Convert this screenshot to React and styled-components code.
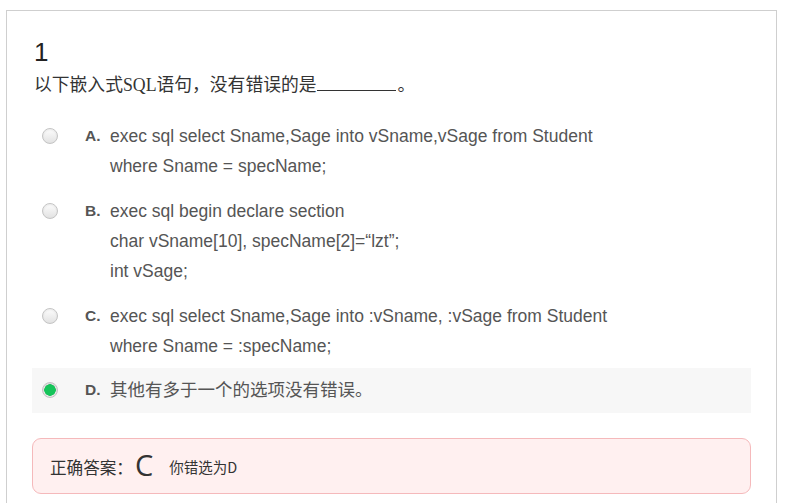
import React from "react";
import styled, { createGlobalStyle } from "styled-components";

const Global = createGlobalStyle`
  html, body { margin: 0; padding: 0; background: #fff; }
  body { font-family: "Liberation Sans", Arial, "Noto Sans CJK SC", sans-serif; }
`;

const Card = styled.div`
  margin: 10px 0 0 6px;
  width: 771px;
  height: 520px;
  box-sizing: border-box;
  border: 1px solid #cfcfcf;
  border-bottom: none;
  padding: 26px 25px 0 25px;
  background: #fff;
`;

const Num = styled.div`
  font-family: "Liberation Sans", Arial, sans-serif;
  font-size: 26px;
  line-height: 30px;
  color: #222;
  padding-left: 2px;
`;

const Question = styled.div`
  font-family: "Liberation Serif", "Noto Sans CJK SC", serif;
  font-size: 17.8px;
  line-height: 22px;
  color: #333;
  margin-top: 7px;
  padding-left: 2px;
`;

const Blank = styled.span`
  display: inline-block;
  width: 79px;
  border-bottom: 1px solid #333;
  height: 16px;
  vertical-align: baseline;
  margin: 0 2px 0 0;
`;

const List = styled.div`
  margin-top: 17px;
  display: flex;
  flex-direction: column;
`;

const Option = styled.div`
  display: flex;
  align-items: flex-start;
  padding: ${(p) => (p.$selected ? "6.5px 0 8px" : "7.5px 0")};
  background: ${(p) => (p.$selected ? "#f7f7f7" : "transparent")};
`;

const RadioCol = styled.div`
  width: 53px;
  height: 30px;
  display: flex;
  align-items: center;
  padding-left: 10px;
  box-sizing: border-box;
`;

const Radio = styled.span`
  width: 16px;
  height: 16px;
  border-radius: 50%;
  box-sizing: border-box;
  border: 1px solid #c4c4c4;
  background: ${(p) =>
    p.$checked
      ? "radial-gradient(circle, #16c45a 0 5.5px, #e6e6e6 6px)"
      : "linear-gradient(#fdfdfd, #e2e2e2)"};
  box-shadow: inset 0 1px 2px rgba(0, 0, 0, 0.08);
`;

const Letter = styled.span`
  width: 25px;
  font-weight: bold;
  font-size: 15.5px;
  line-height: 30px;
  color: #555;
`;

const Text = styled.div`
  font-size: 17.5px;
  line-height: 30px;
  color: #555;
  font-family: "Liberation Sans", Arial, "Noto Sans CJK SC", sans-serif;
`;

const Answer = styled.div`
  margin-top: 25px;
  height: 56px;
  box-sizing: border-box;
  border: 1px solid #f5b9bb;
  border-radius: 9px;
  background: #fff0f0;
  display: flex;
  align-items: center;
  padding: 2px 0 0 17px;
  font-family: "Noto Sans CJK SC", "Open Sans", sans-serif;
  color: #333;
`;

const AnsLabel = styled.span`
  font-size: 16.6px;
`;

const AnsLetter = styled.span`
  font-family: "Open Sans", "Noto Sans", sans-serif;
  font-size: 29px;
  margin: -4px 16px 0 2px;
`;

const AnsNote = styled.span`
  font-size: 14.5px;
`;

const options = [
  { k: "A", lines: ["exec sql select Sname,Sage into vSname,vSage from Student", "where Sname = specName;"] },
  { k: "B", lines: ["exec sql begin declare section", "char vSname[10], specName[2]=\u201clzt\u201d;", "int vSage;"] },
  { k: "C", lines: ["exec sql select Sname,Sage into :vSname, :vSage from Student", "where Sname = :specName;"] },
  { k: "D", lines: ["其他有多于一个的选项没有错误。"], selected: true },
];

export default function App() {
  return (
    <>
      <Global />
      <Card>
        <Num>1</Num>
        <Question>
          以下嵌入式SQL语句，没有错误的是<Blank />。
        </Question>
        <List>
          {options.map((o) => (
            <Option key={o.k} $selected={o.selected}>
              <RadioCol>
                <Radio $checked={o.selected} />
              </RadioCol>
              <Letter>{o.k}.</Letter>
              <Text>
                {o.lines.map((l, i) => (
                  <div key={i}>{l}</div>
                ))}
              </Text>
            </Option>
          ))}
        </List>
        <Answer>
          <AnsLabel>正确答案：</AnsLabel>
          <AnsLetter>C</AnsLetter>
          <AnsNote>你错选为D</AnsNote>
        </Answer>
      </Card>
    </>
  );
}
